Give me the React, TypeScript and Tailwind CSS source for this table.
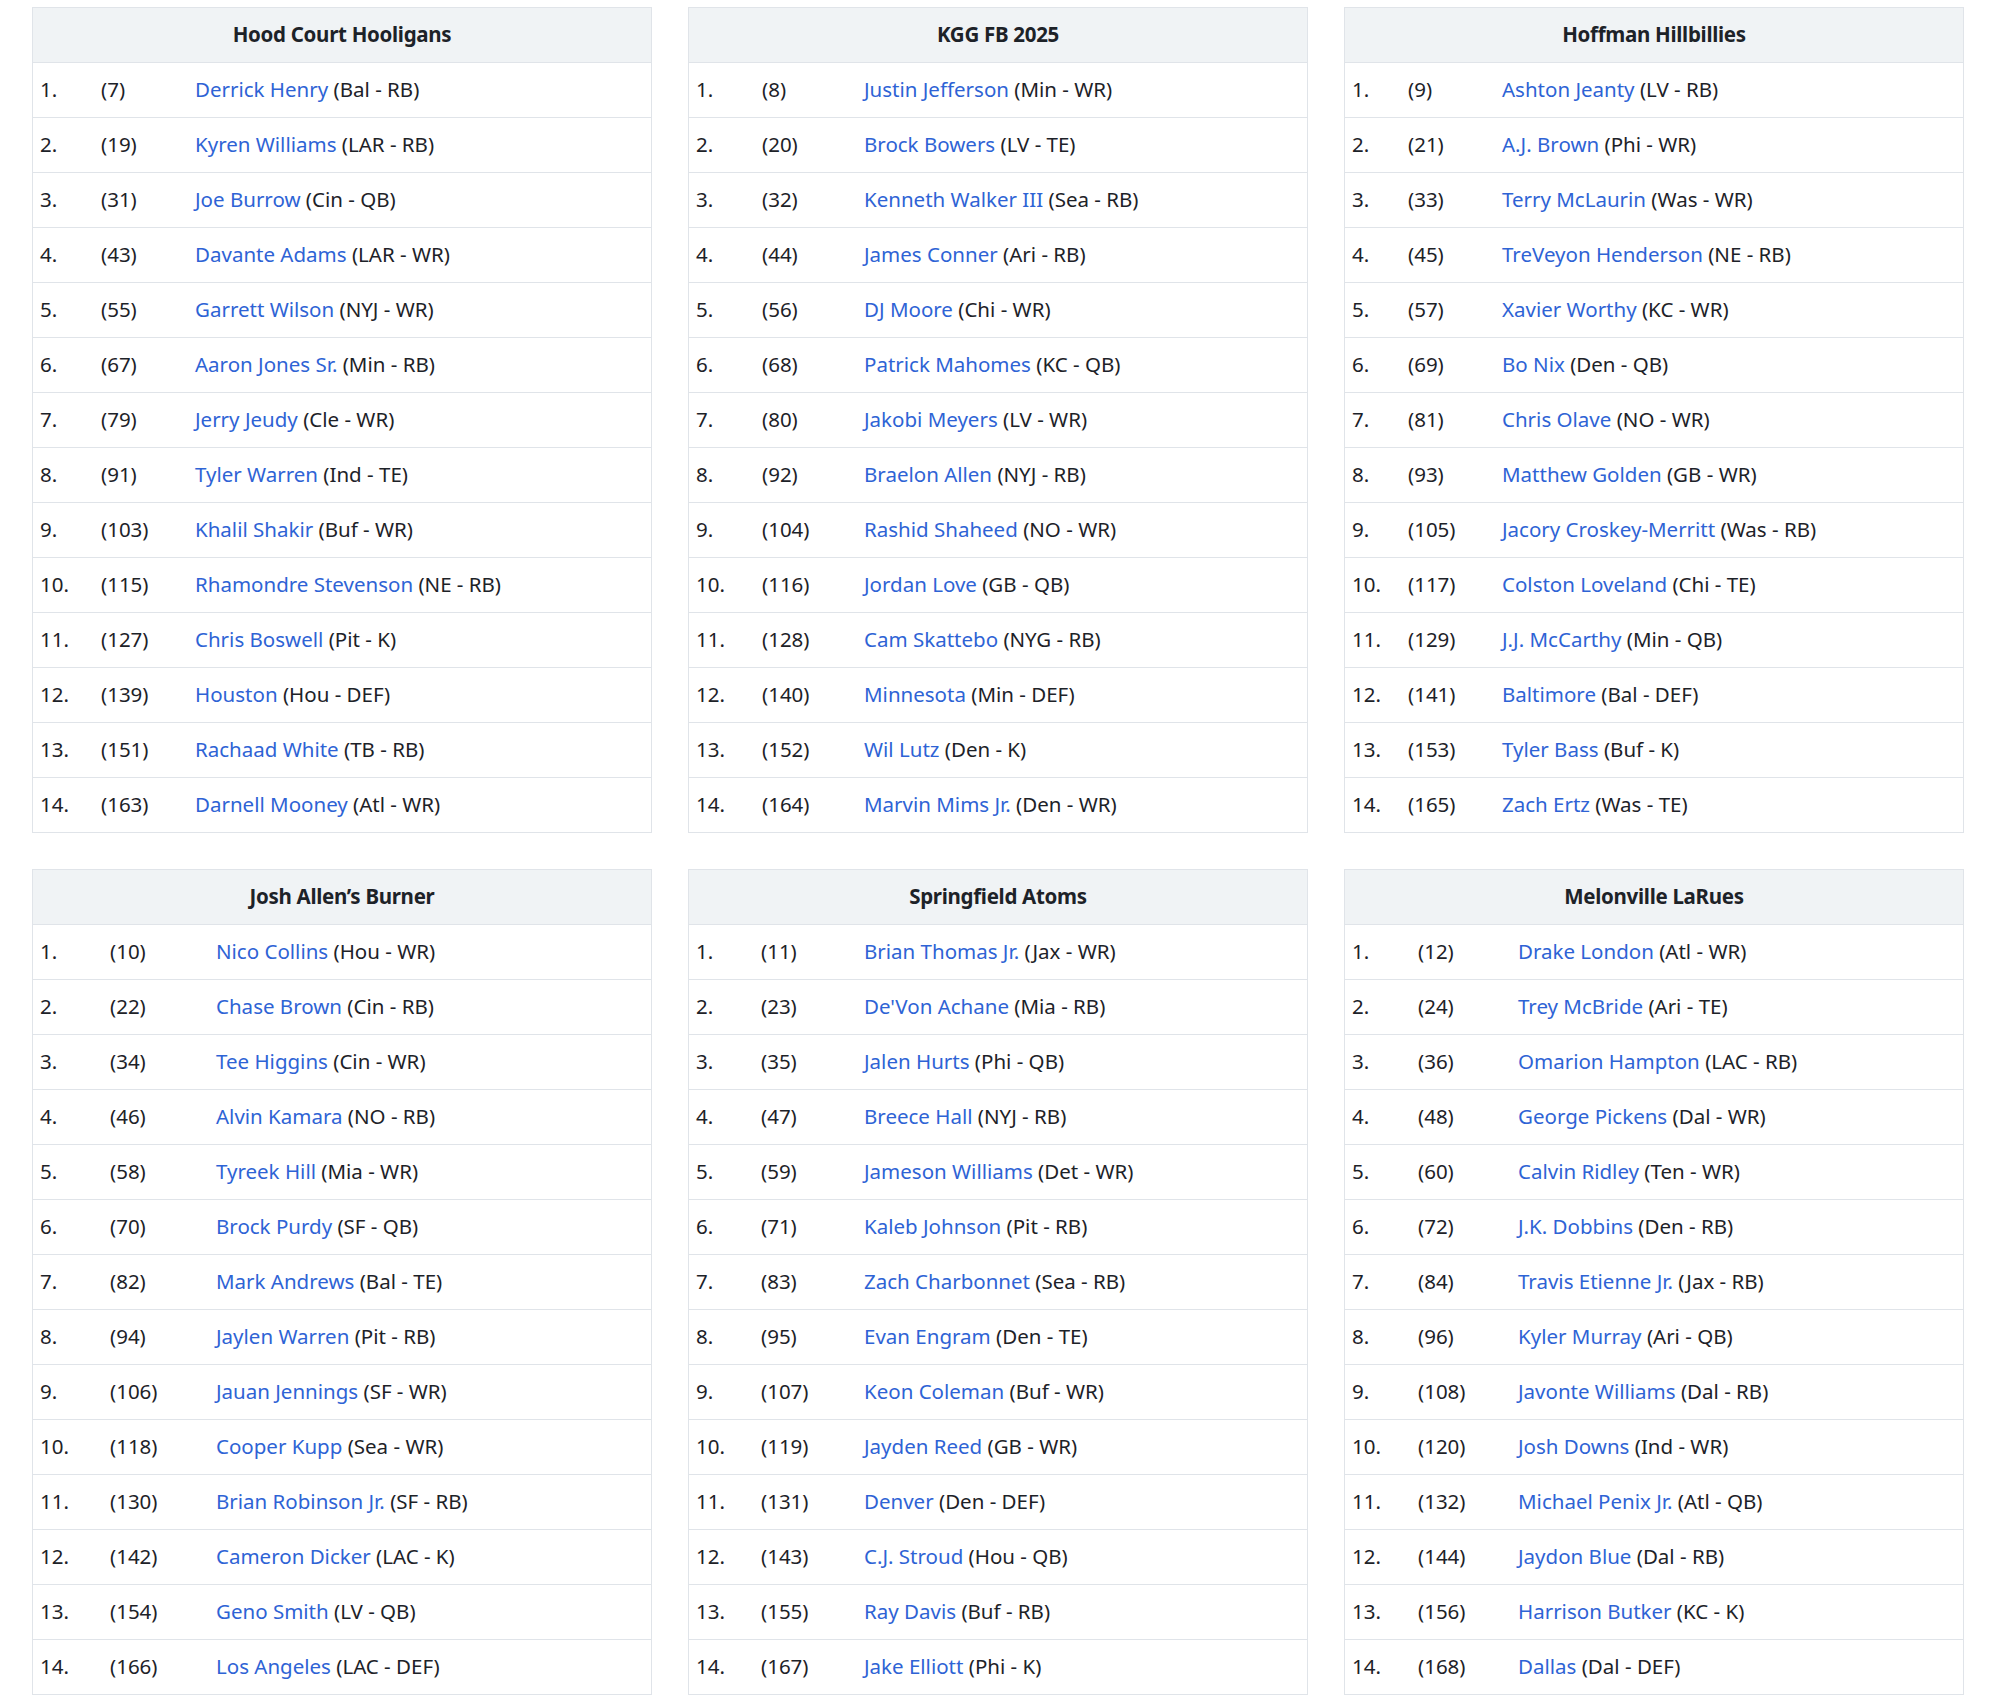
import React from 'react';

type Pick = [string, string, string, string];

const teams: { name: string; cols: string; picks: Pick[] }[] = [
    {
        name: 'Hood Court Hooligans',
        cols: 'grid-cols-[61px_94px_1fr]',
        picks: [
            ['1.', '(7)', 'Derrick Henry', '(Bal - RB)'],
            ['2.', '(19)', 'Kyren Williams', '(LAR - RB)'],
            ['3.', '(31)', 'Joe Burrow', '(Cin - QB)'],
            ['4.', '(43)', 'Davante Adams', '(LAR - WR)'],
            ['5.', '(55)', 'Garrett Wilson', '(NYJ - WR)'],
            ['6.', '(67)', 'Aaron Jones Sr.', '(Min - RB)'],
            ['7.', '(79)', 'Jerry Jeudy', '(Cle - WR)'],
            ['8.', '(91)', 'Tyler Warren', '(Ind - TE)'],
            ['9.', '(103)', 'Khalil Shakir', '(Buf - WR)'],
            ['10.', '(115)', 'Rhamondre Stevenson', '(NE - RB)'],
            ['11.', '(127)', 'Chris Boswell', '(Pit - K)'],
            ['12.', '(139)', 'Houston', '(Hou - DEF)'],
            ['13.', '(151)', 'Rachaad White', '(TB - RB)'],
            ['14.', '(163)', 'Darnell Mooney', '(Atl - WR)'],
        ],
    },
    {
        name: 'KGG FB 2025',
        cols: 'grid-cols-[66px_102px_1fr]',
        picks: [
            ['1.', '(8)', 'Justin Jefferson', '(Min - WR)'],
            ['2.', '(20)', 'Brock Bowers', '(LV - TE)'],
            ['3.', '(32)', 'Kenneth Walker III', '(Sea - RB)'],
            ['4.', '(44)', 'James Conner', '(Ari - RB)'],
            ['5.', '(56)', 'DJ Moore', '(Chi - WR)'],
            ['6.', '(68)', 'Patrick Mahomes', '(KC - QB)'],
            ['7.', '(80)', 'Jakobi Meyers', '(LV - WR)'],
            ['8.', '(92)', 'Braelon Allen', '(NYJ - RB)'],
            ['9.', '(104)', 'Rashid Shaheed', '(NO - WR)'],
            ['10.', '(116)', 'Jordan Love', '(GB - QB)'],
            ['11.', '(128)', 'Cam Skattebo', '(NYG - RB)'],
            ['12.', '(140)', 'Minnesota', '(Min - DEF)'],
            ['13.', '(152)', 'Wil Lutz', '(Den - K)'],
            ['14.', '(164)', 'Marvin Mims Jr.', '(Den - WR)'],
        ],
    },
    {
        name: 'Hoffman Hillbillies',
        cols: 'grid-cols-[56px_94px_1fr]',
        picks: [
            ['1.', '(9)', 'Ashton Jeanty', '(LV - RB)'],
            ['2.', '(21)', 'A.J. Brown', '(Phi - WR)'],
            ['3.', '(33)', 'Terry McLaurin', '(Was - WR)'],
            ['4.', '(45)', 'TreVeyon Henderson', '(NE - RB)'],
            ['5.', '(57)', 'Xavier Worthy', '(KC - WR)'],
            ['6.', '(69)', 'Bo Nix', '(Den - QB)'],
            ['7.', '(81)', 'Chris Olave', '(NO - WR)'],
            ['8.', '(93)', 'Matthew Golden', '(GB - WR)'],
            ['9.', '(105)', 'Jacory Croskey-Merritt', '(Was - RB)'],
            ['10.', '(117)', 'Colston Loveland', '(Chi - TE)'],
            ['11.', '(129)', 'J.J. McCarthy', '(Min - QB)'],
            ['12.', '(141)', 'Baltimore', '(Bal - DEF)'],
            ['13.', '(153)', 'Tyler Bass', '(Buf - K)'],
            ['14.', '(165)', 'Zach Ertz', '(Was - TE)'],
        ],
    },
    {
        name: 'Josh Allen\u2019s Burner',
        cols: 'grid-cols-[70px_106px_1fr]',
        picks: [
            ['1.', '(10)', 'Nico Collins', '(Hou - WR)'],
            ['2.', '(22)', 'Chase Brown', '(Cin - RB)'],
            ['3.', '(34)', 'Tee Higgins', '(Cin - WR)'],
            ['4.', '(46)', 'Alvin Kamara', '(NO - RB)'],
            ['5.', '(58)', 'Tyreek Hill', '(Mia - WR)'],
            ['6.', '(70)', 'Brock Purdy', '(SF - QB)'],
            ['7.', '(82)', 'Mark Andrews', '(Bal - TE)'],
            ['8.', '(94)', 'Jaylen Warren', '(Pit - RB)'],
            ['9.', '(106)', 'Jauan Jennings', '(SF - WR)'],
            ['10.', '(118)', 'Cooper Kupp', '(Sea - WR)'],
            ['11.', '(130)', 'Brian Robinson Jr.', '(SF - RB)'],
            ['12.', '(142)', 'Cameron Dicker', '(LAC - K)'],
            ['13.', '(154)', 'Geno Smith', '(LV - QB)'],
            ['14.', '(166)', 'Los Angeles', '(LAC - DEF)'],
        ],
    },
    {
        name: 'Springfield Atoms',
        cols: 'grid-cols-[65px_103px_1fr]',
        picks: [
            ['1.', '(11)', 'Brian Thomas Jr.', '(Jax - WR)'],
            ['2.', '(23)', "De'Von Achane", '(Mia - RB)'],
            ['3.', '(35)', 'Jalen Hurts', '(Phi - QB)'],
            ['4.', '(47)', 'Breece Hall', '(NYJ - RB)'],
            ['5.', '(59)', 'Jameson Williams', '(Det - WR)'],
            ['6.', '(71)', 'Kaleb Johnson', '(Pit - RB)'],
            ['7.', '(83)', 'Zach Charbonnet', '(Sea - RB)'],
            ['8.', '(95)', 'Evan Engram', '(Den - TE)'],
            ['9.', '(107)', 'Keon Coleman', '(Buf - WR)'],
            ['10.', '(119)', 'Jayden Reed', '(GB - WR)'],
            ['11.', '(131)', 'Denver', '(Den - DEF)'],
            ['12.', '(143)', 'C.J. Stroud', '(Hou - QB)'],
            ['13.', '(155)', 'Ray Davis', '(Buf - RB)'],
            ['14.', '(167)', 'Jake Elliott', '(Phi - K)'],
        ],
    },
    {
        name: 'Melonville LaRues',
        cols: 'grid-cols-[66px_100px_1fr]',
        picks: [
            ['1.', '(12)', 'Drake London', '(Atl - WR)'],
            ['2.', '(24)', 'Trey McBride', '(Ari - TE)'],
            ['3.', '(36)', 'Omarion Hampton', '(LAC - RB)'],
            ['4.', '(48)', 'George Pickens', '(Dal - WR)'],
            ['5.', '(60)', 'Calvin Ridley', '(Ten - WR)'],
            ['6.', '(72)', 'J.K. Dobbins', '(Den - RB)'],
            ['7.', '(84)', 'Travis Etienne Jr.', '(Jax - RB)'],
            ['8.', '(96)', 'Kyler Murray', '(Ari - QB)'],
            ['9.', '(108)', 'Javonte Williams', '(Dal - RB)'],
            ['10.', '(120)', 'Josh Downs', '(Ind - WR)'],
            ['11.', '(132)', 'Michael Penix Jr.', '(Atl - QB)'],
            ['12.', '(144)', 'Jaydon Blue', '(Dal - RB)'],
            ['13.', '(156)', 'Harrison Butker', '(KC - K)'],
            ['14.', '(168)', 'Dallas', '(Dal - DEF)'],
        ],
    },
];

function TeamTable({ team }: { team: (typeof teams)[number] }) {
    return (
        <div className="border border-[#e0e4e9] bg-white">
            <div className="h-[54px] pb-[2px] flex items-center justify-center bg-[#f0f3f5] text-[20.5px] font-bold text-[#1d2228] tracking-[-0.3px]">
                {team.name}
            </div>
            {team.picks.map((p) => (
                <div
                    key={p[0]}
                    className={`grid ${team.cols} h-[55px] pb-[2px] items-center border-t border-[#e0e4e9] pl-[7px] text-[20.5px] text-[#1d2228]`}
                >
                    <div>{p[0]}</div>
                    <div>{p[1]}</div>
                    <div className="whitespace-nowrap">
                        <a href="#" className="text-[#2e63d5]">{p[2]}</a> {p[3]}
                    </div>
                </div>
            ))}
        </div>
    );
}

export default function App() {
    return (
        <div className="min-h-[1700px] bg-white pt-[7px] pl-[32px] font-['Noto_Sans',sans-serif]">
            <div className="grid grid-cols-[620px_620px_620px] gap-x-[36px] gap-y-[36px]">
                {teams.map((t) => (
                    <TeamTable key={t.name} team={t} />
                ))}
            </div>
        </div>
    );
}
